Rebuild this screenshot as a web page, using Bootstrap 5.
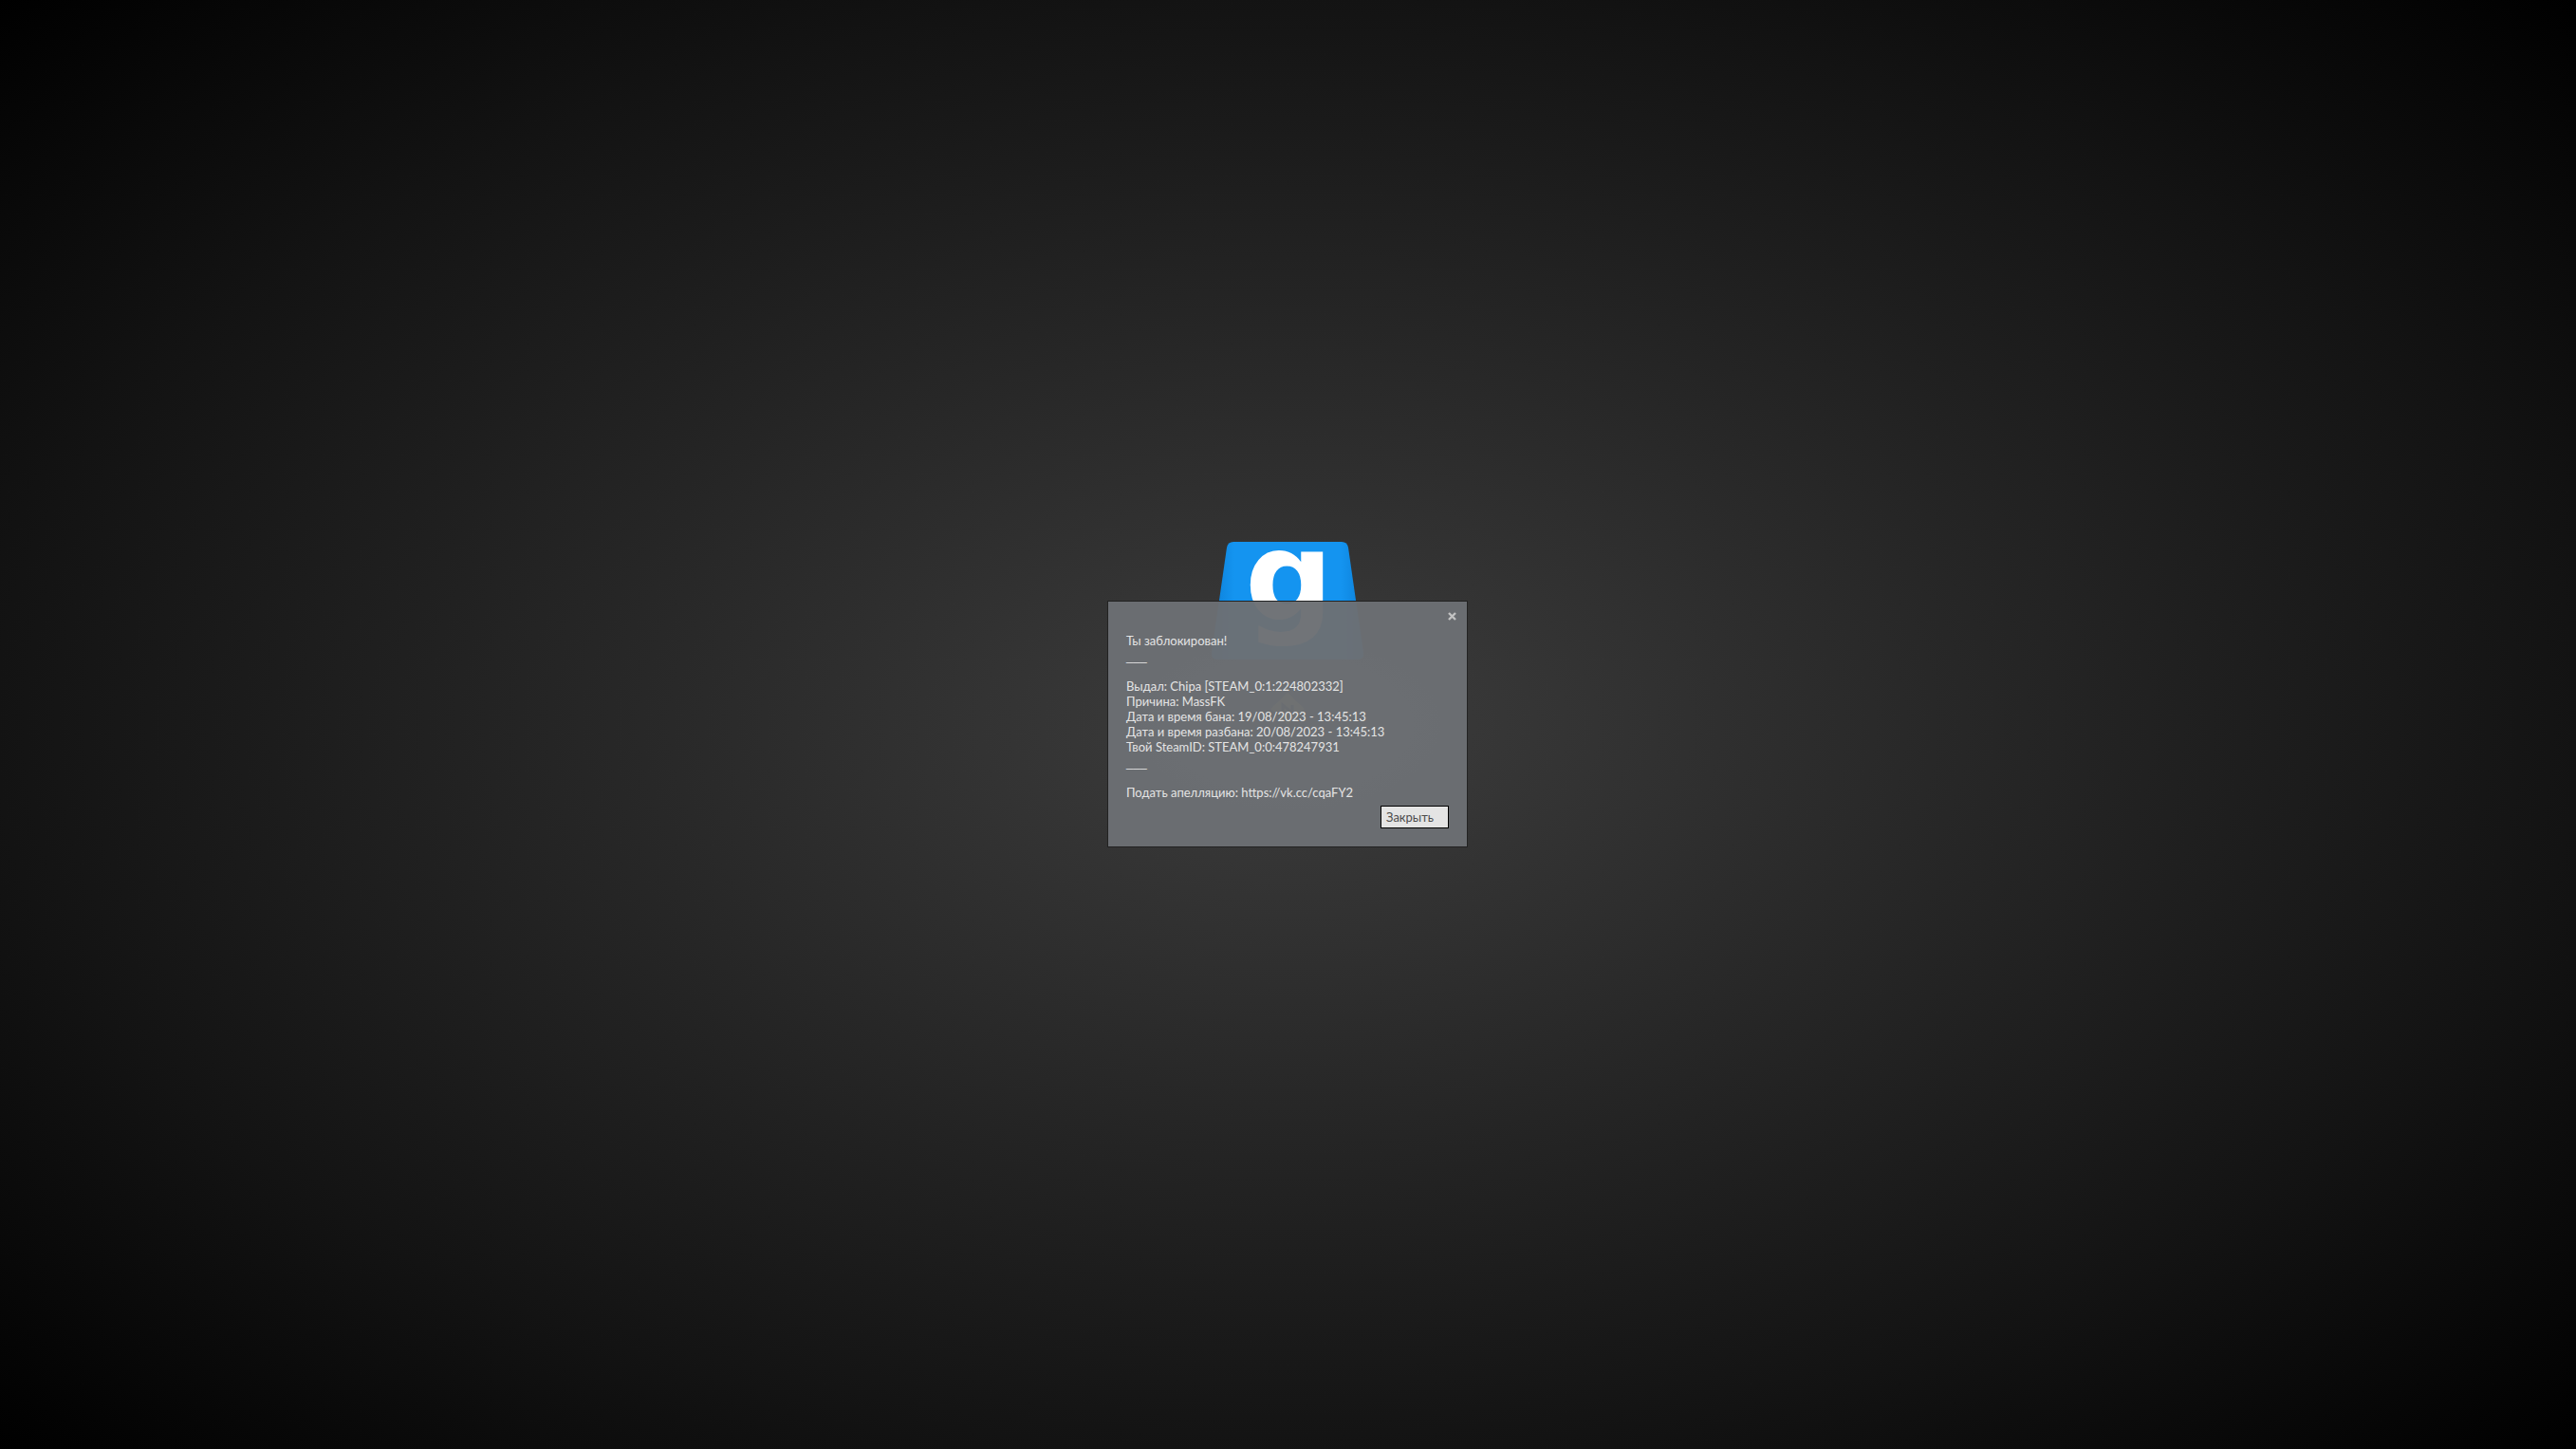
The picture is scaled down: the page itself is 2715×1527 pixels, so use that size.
<!DOCTYPE html>
<html lang="ru">
<head>
<meta charset="utf-8">
<meta name="viewport" content="width=device-width, initial-scale=1">
<title>Ты заблокирован!</title>
<link href="https://cdn.jsdelivr.net/npm/bootstrap@5.3.0/dist/css/bootstrap.min.css" rel="stylesheet">
<style>
body{background:#000 radial-gradient(ellipse farthest-corner at center,#3d3d3d 0%,#131313 71%,#000 100%);font-family:Lato,"Noto Sans",sans-serif;font-size:13px;line-height:16px}
.ban-stage{padding:0 1px 2px 0}
.ban-stage > *{grid-area:1/1}
.loader-logo{padding-bottom:183px}
.ban-dialog{width:380px;background:rgba(108,111,116,.97);border:1px solid #222;color:#e4e4e4;padding:33px 19px 19px;z-index:1}
.ban-close{top:11px;right:11px;color:#c2c2c2;line-height:0}
.ban-button{width:72px;height:24px;background:#e4e4e4;border:1px solid #000;color:#4c4c4c;padding:0 5px;margin-top:6px}
.ban-text{white-space:pre-line}
.ban-rule{font-family:"Liberation Sans",sans-serif;line-height:1}
</style>
</head>
<body>
<main class="ban-stage min-vh-100 d-grid align-content-center align-items-center justify-content-center">
  <div class="loader-logo">
    <svg class="d-block mx-auto" width="180" height="200" viewBox="0 0 180 200" aria-hidden="true">
      <defs><linearGradient id="edge"><stop offset="0" stop-color="#0c80d8"/><stop offset=".15" stop-color="#1494f0"/><stop offset=".85" stop-color="#1494f0"/><stop offset="1" stop-color="#0c80d8"/></linearGradient></defs>
      <path d="M33 0H147Q153 0 154 6L170 117Q171 124 164 124H16Q9 124 10 117L26 6Q27 0 33 0Z" fill="url(#edge)"/>
      <text x="45" y="82" font-family="DejaVu Sans" font-weight="700" font-size="130" fill="#fff">g</text>
      <path d="M90 159L108 176L90 193L72 176Z" fill="#b09a40"/>
      <path d="M85 180V172L95 180V172" fill="none" stroke="#333" stroke-width="3"/>
    </svg>
  </div>
  <section class="ban-dialog position-relative d-flex flex-column" role="dialog" aria-label="Ты заблокирован!">
    <button class="ban-close btn p-0 border-0 position-absolute" type="button" aria-label="Закрыть окно"><svg width="9" height="9" viewBox="0 0 9 9"><path d="M1 1L8 8M8 1L1 8" stroke="currentColor" stroke-width="2.4"/></svg></button>
    <div class="ban-text">Ты заблокирован!
<span class="ban-rule">___</span>

Выдал: Chipa [STEAM_0:1:224802332]
Причина: MassFK
Дата и время бана: 19/08/2023 - 13:45:13
Дата и время разбана: 20/08/2023 - 13:45:13
Твой SteamID: STEAM_0:0:478247931
<span class="ban-rule">___</span>

Подать апелляцию: <a class="text-reset text-decoration-none" href="https://vk.cc/cqaFY2">https://vk.cc/cqaFY2</a></div>
    <button class="ban-button align-self-end text-start" type="button">Закрыть</button>
  </section>
</main>
<script src="https://cdn.jsdelivr.net/npm/bootstrap@5.3.0/dist/js/bootstrap.bundle.min.js"></script>
</body>
</html>
